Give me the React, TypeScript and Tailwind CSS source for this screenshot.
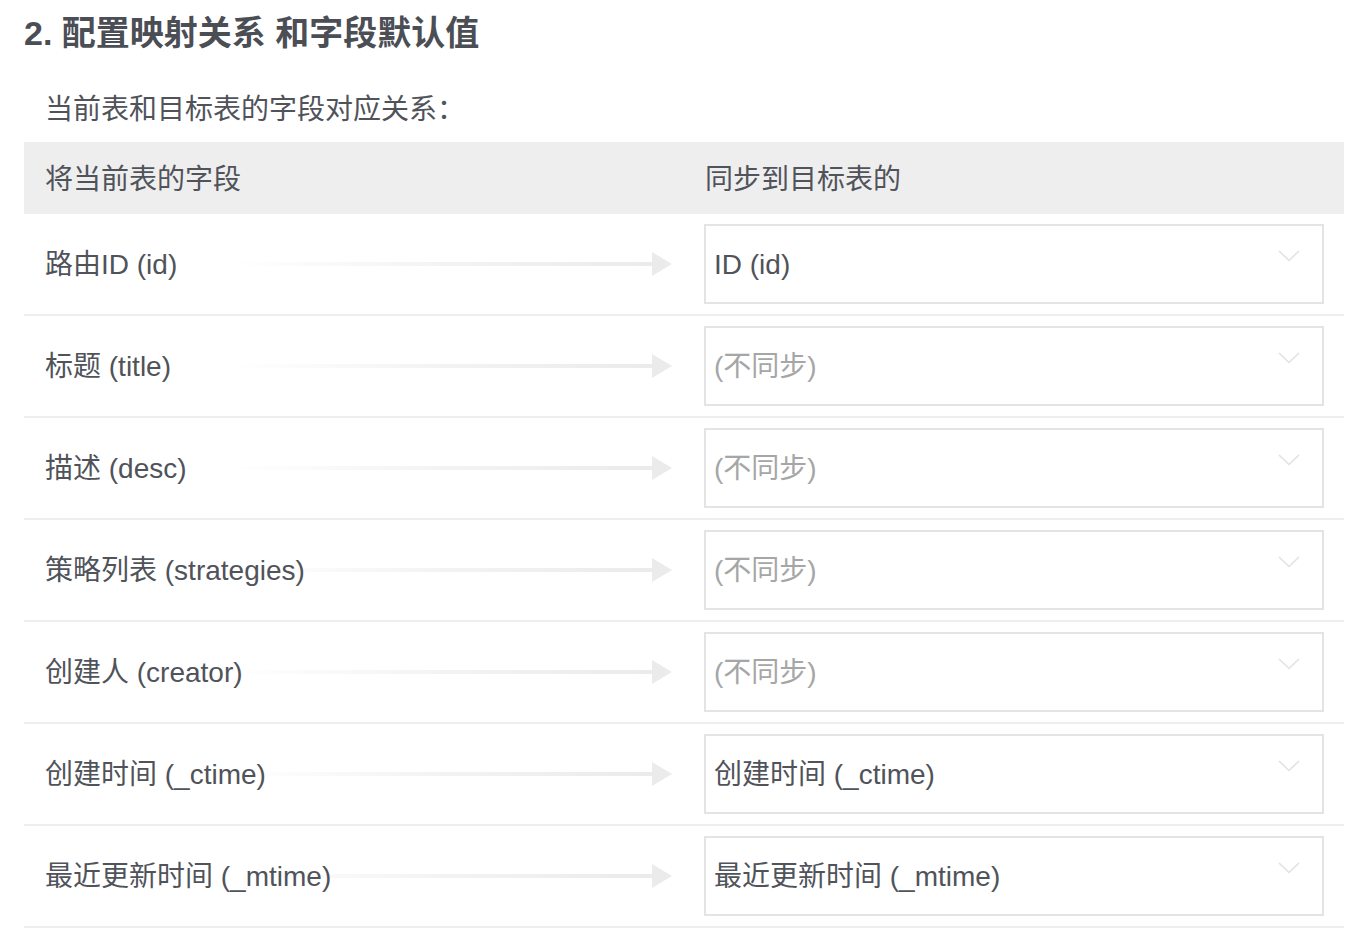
import React from "react";

type FieldRow = {
  source: string;
  target: string | null;
};

const rows: FieldRow[] = [
  { source: "路由ID (id)", target: "ID (id)" },
  { source: "标题 (title)", target: null },
  { source: "描述 (desc)", target: null },
  { source: "策略列表 (strategies)", target: null },
  { source: "创建人 (creator)", target: null },
  { source: "创建时间 (_ctime)", target: "创建时间 (_ctime)" },
  { source: "最近更新时间 (_mtime)", target: "最近更新时间 (_mtime)" },
];

const font = "font-['Liberation_Sans','Noto_Sans_CJK_SC',sans-serif]";

function MapArrow() {
  return (
    <div className="pointer-events-none absolute left-[206px] top-1/2 flex h-[24px] w-[442px] -translate-y-1/2 items-center">
      <div className="h-[4px] flex-1 bg-gradient-to-r from-[#ffffff00] via-[#f3f3f3] to-[#ebebeb]" />
      <svg width="20" height="24" viewBox="0 0 20 24" className="shrink-0">
        <polygon points="0,0 20,12 0,24" fill="#ebebeb" />
      </svg>
    </div>
  );
}

function Chevron() {
  return (
    <svg width="22" height="12" viewBox="0 0 22 12" className="shrink-0">
      <polyline points="1,1 11,10.5 21,1" fill="none" stroke="#e2e2e2" strokeWidth="1.6" />
    </svg>
  );
}

export default function App() {
  return (
    <div className={`min-h-screen bg-white pl-[24px] pr-[14px] pt-[13px] ${font}`}>
      <h1 className="h-[40px] text-[34px] font-bold leading-[40px] text-[#4b4e55]">2. 配置映射关系 和字段默认值</h1>

      <p className="mt-[37px] pl-[21px] text-[28px] leading-[40px] text-[#50535a]">当前表和目标表的字段对应关系：</p>

      <div className="mt-[12px] w-[1320px]">
        <div className="flex h-[72px] items-center bg-[#eeeeee] pt-[3px] text-[28px] text-[#50535a]">
          <div className="w-[680px] pl-[21px]">将当前表的字段</div>
          <div className="pl-[1px]">同步到目标表的</div>
        </div>

        {rows.map((row) => (
          <div key={row.source} className="flex h-[102px] items-center border-b-2 border-[#eeeeee]">
            <div className="relative flex h-full w-[680px] items-center pl-[21px]">
              <MapArrow />
              <span className="relative pt-[2px] text-[28px] text-[#50535a]">{row.source}</span>
            </div>
            <div className="pr-[20px]">
              <div className="flex h-[80px] w-[620px] items-center justify-between border-2 border-[#e4e4e4] pl-[8px] pr-[22px]">
                <span className={`pt-[2px] text-[28px] ${row.target ? "text-[#50535a]" : "text-[#a6a6a6]"}`}>
                  {row.target ?? "(不同步)"}
                </span>
                <div className="-mt-[16px]">
                  <Chevron />
                </div>
              </div>
            </div>
          </div>
        ))}
      </div>
    </div>
  );
}
